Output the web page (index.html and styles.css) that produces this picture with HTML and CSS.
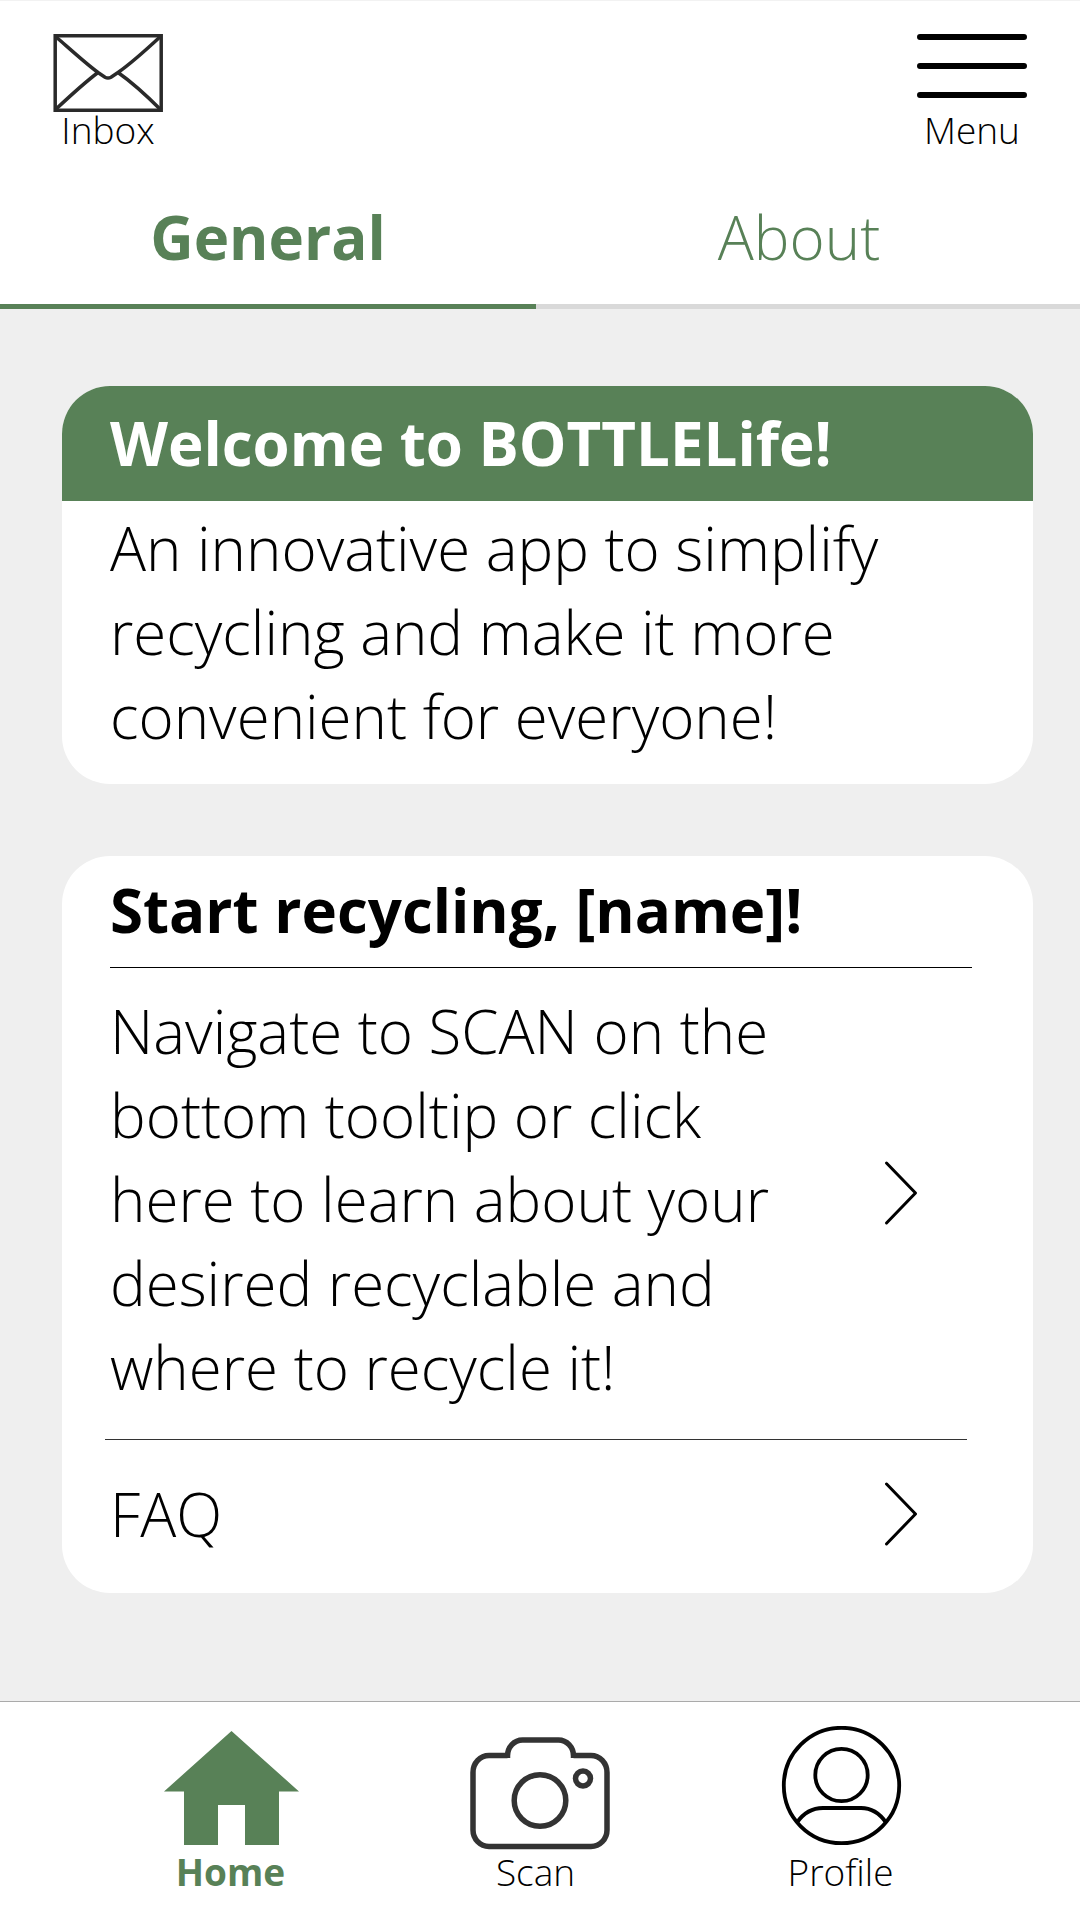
FILE: index.html
```html
<!DOCTYPE html>
<html lang="en">
<head>
<meta charset="utf-8">
<meta name="viewport" content="width=device-width, initial-scale=1">
<title>BOTTLELife</title>
<link rel="stylesheet" href="styles.css">
</head>
<body>
<header class="header">
  <div class="toolbar">
    <button class="tool" type="button">
      <svg class="tool-icon" viewBox="0 0 110 78" fill="none" stroke="#2a2a2a" stroke-width="3.5" aria-hidden="true">
        <rect x="2.2" y="1.75" width="106" height="74.5"/>
        <path d="M2 2C17 15 31 28 45 38.500L52 43.200Q55 44.800 58 43.200L65 38.500C80 28 94 15 108 2M45 38.500C31 49 17 62 2 76M65 38.500C80 49 94 62 108 76"/>
      </svg>
      <span class="label">Inbox</span>
    </button>
    <button class="tool" type="button">
      <svg class="tool-icon" viewBox="0 0 110 78" stroke="#000" stroke-width="6" stroke-linecap="round" aria-hidden="true">
        <path d="M3 3H107M3 32H107M3 61H107"/>
      </svg>
      <span class="label">Menu</span>
    </button>
  </div>
  <nav class="tabs" aria-label="Sections">
    <a class="tab tab-active" href="#general" aria-current="page">General</a>
    <a class="tab" href="#about">About</a>
  </nav>
</header>

<main class="content" id="general">
  <section class="card">
    <h1 class="card-banner">Welcome to BOTTLELife!</h1>
    <p class="card-text">An innovative app to simplify recycling and make it more convenient for everyone!</p>
  </section>

  <section class="card">
    <h2 class="card-title">Start recycling, [name]!</h2>
    <a class="row row-scan" href="#scan">
      <span>Navigate to SCAN on the bottom tooltip or click here to learn about your desired recyclable and where to recycle it!</span>
      <svg class="chevron" viewBox="0 0 32 63" aria-hidden="true"><path d="M1.500 1L30.500 31L1.500 61"/></svg>
    </a>
    <a class="row row-faq" href="#faq">
      <span>FAQ</span>
      <svg class="chevron" viewBox="0 0 32 63" aria-hidden="true"><path d="M1.500 1L30.500 31L1.500 61"/></svg>
    </a>
  </section>
</main>

<nav class="bottom-nav" aria-label="Main">
  <a class="nav-item nav-active" href="#home" aria-current="page">
    <svg class="nav-icon" viewBox="0 0 148 128" fill="currentColor" aria-hidden="true">
      <path d="M74.500 5L142 65.500H122V119H88V79H61V119H27V65.500H7Z"/>
    </svg>
    <span class="label">Home</span>
  </a>
  <a class="nav-item" href="#scan">
    <svg class="nav-icon" viewBox="0 0 148 128" fill="none" stroke="#333" stroke-width="5.500" aria-hidden="true">
      <path d="M45.500 32V29.500H27A16 17 0 0 0 11 46.500V104A16 16.500 0 0 0 27 120.500H129A16 16.500 0 0 0 145 104V46.500A16 17 0 0 0 129 29.500H111.500V32M45.500 30A15 16 0 0 1 60.500 14H96.500A15 16 0 0 1 111.500 30"/>
      <circle cx="78" cy="74.500" r="25.800"/>
      <circle cx="121" cy="52.500" r="7.500"/>
    </svg>
    <span class="label">Scan</span>
  </a>
  <a class="nav-item" href="#profile">
    <svg class="nav-icon" viewBox="0 0 148 128" fill="none" stroke="#000" stroke-width="3.800" aria-hidden="true">
      <circle cx="74.500" cy="59.500" r="57.700"/>
      <circle cx="74.500" cy="49" r="26.200"/>
      <path d="M30 96.500Q40 82 56 82H94Q109 82 119 96.500"/>
    </svg>
    <span class="label">Profile</span>
  </a>
</nav>
</body>
</html>
```
FILE: styles.css
```css
*,
*::before,
*::after {
  box-sizing: border-box;
}

:root {
  --green: #588157;
  --page: #efefef;
}

body {
  display: flex;
  flex-direction: column;
  min-height: 100vh;
  margin: 0;
  background: var(--page);
  color: #000;
  font-family: "Open Sans", "Noto Sans", sans-serif;
  font-size: 60px;
  font-weight: 300;
  line-height: 84px;
}

a {
  color: inherit;
  text-decoration: none;
}

.header {
  border-top: 1px solid #f2f2f2;
  background: #fff;
}

.toolbar {
  display: flex;
  justify-content: space-between;
  padding: 33px 53px 0;
}

.tool {
  display: flex;
  flex-direction: column;
  align-items: center;
  padding: 0;
  border: 0;
  background: none;
  color: inherit;
  font: inherit;
  cursor: pointer;
}

.tool-icon {
  width: 110px;
  height: 78px;
}

.label {
  font-size: 37px;
  line-height: 36px;
}

.tabs {
  display: flex;
}

.tab {
  flex: 1 1 0;
  padding: 47px 18px 25px 0;
  border-bottom: 5px solid #d9d9d9;
  color: var(--green);
  text-align: center;
}

.tab-active {
  flex: 0 0 536px;
  padding-right: 0;
  border-color: var(--green);
  font-weight: 700;
}

.content {
  display: flex;
  flex: 1;
  flex-direction: column;
  gap: 72px;
  padding: 77px 47px 108px 62px;
}

.card {
  overflow: hidden;
  border-radius: 48px;
  background: #fff;
}

.card-banner,
.card-title {
  margin: 0;
  font-size: 60px;
  font-weight: 700;
}

.card-banner {
  padding: 15px 48px 16px;
  background: var(--green);
  color: #fff;
}

.card-text {
  margin: 0;
  padding: 5px 48px 26px;
}

.card-title {
  padding: 12px 48px 15px;
}

.row {
  display: flex;
  align-items: center;
  justify-content: space-between;
  gap: 80px;
  border-top: 1px solid #000;
}

.row-scan {
  margin: 0 61px 0 48px;
  padding: 21px 55px 30px 0;
}

.row-scan .chevron {
  margin-bottom: 12px;
}

.row-faq {
  margin: 0 66px 0 43px;
  padding: 32px 50px 37px 5px;
  border-color: #333;
}

.chevron {
  flex: none;
  width: 32px;
  height: 63px;
  fill: none;
  stroke: #000;
  stroke-width: 3;
  stroke-linecap: round;
  stroke-linejoin: round;
  overflow: visible;
}

.bottom-nav {
  display: grid;
  grid-template-columns: repeat(3, 1fr);
  padding: 24px 87px 30px 78px;
  border-top: 1px solid #aaa;
  background: #fff;
}

.nav-item {
  display: flex;
  flex-direction: column;
  align-items: center;
}

.nav-active {
  color: var(--green);
  font-weight: 700;
}

.nav-icon {
  width: 148px;
  height: 128px;
}
```
